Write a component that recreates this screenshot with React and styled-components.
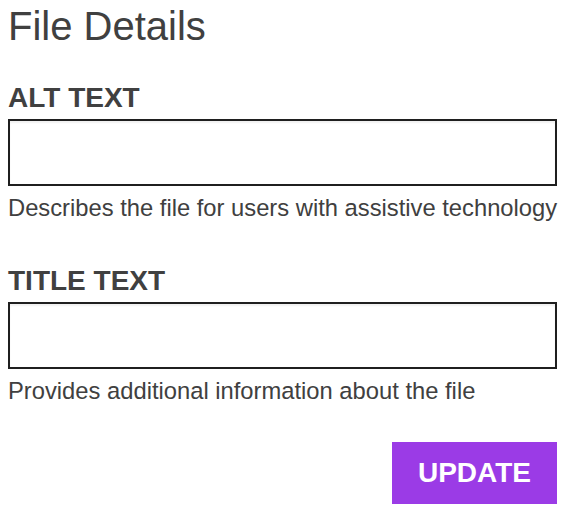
import React from 'react'
import styled, { createGlobalStyle } from 'styled-components'

const TEXT_COLOR = '#404040'
const BORDER_COLOR = '#1f1f1f'
const ACCENT_COLOR = '#9b3be6'

const GlobalStyle = createGlobalStyle`
  body {
    margin: 0;
    background: #ffffff;
    font-family: "Liberation Sans", Arial, Helvetica, sans-serif;
  }
`

const Container = styled.div`
  display: flex;
  flex-direction: column;
  padding: 6px 12px 0 8px;
  width: 549px;
`

const Header = styled.h1`
  color: ${TEXT_COLOR};
  font-size: 40px;
  font-weight: 400;
  line-height: 40px;
  margin: 0 0 38px;
`

const Field = styled.div`
  display: flex;
  flex-direction: column;
  margin-bottom: ${(props) => props.spacing || '0px'};
`

const Label = styled.label`
  color: ${TEXT_COLOR};
  font-size: 28px;
  font-weight: 700;
  line-height: 27px;
  margin-bottom: 8px;
`

const Input = styled.input`
  box-sizing: border-box;
  height: 67px;
  width: 100%;
  margin: 0;
  border: 2px solid ${BORDER_COLOR};
  border-radius: 0;
  box-shadow: inset 0 2px 2px rgba(0, 0, 0, 0.06);
  background: #ffffff;
  font-family: inherit;
  font-size: 22px;
  padding: 0 12px;
  outline: none;
`

const Hint = styled.p`
  color: ${TEXT_COLOR};
  font-size: 23.75px;
  line-height: 23.5px;
  margin: 10px 0 0;
  white-space: nowrap;
`

const Actions = styled.div`
  display: flex;
  justify-content: flex-end;
  margin-top: 40px;
`

const Button = styled.button`
  display: flex;
  align-items: center;
  justify-content: center;
  width: 165px;
  height: 62px;
  border: none;
  border-radius: 0;
  background: ${ACCENT_COLOR};
  color: #ffffff;
  font-family: inherit;
  font-size: 28px;
  font-weight: 700;
  padding: 0;
  cursor: pointer;
`

const App = () => {
  return (
    <>
      <GlobalStyle />
      <Container>
        <Header>File Details</Header>
        <Field spacing="47px">
          <Label htmlFor="alt-text">ALT TEXT</Label>
          <Input id="alt-text" type="text" />
          <Hint>Describes the file for users with assistive technology</Hint>
        </Field>
        <Field>
          <Label htmlFor="title-text">TITLE TEXT</Label>
          <Input id="title-text" type="text" />
          <Hint>Provides additional information about the file</Hint>
        </Field>
        <Actions>
          <Button type="button">UPDATE</Button>
        </Actions>
      </Container>
    </>
  )
}

export default App
